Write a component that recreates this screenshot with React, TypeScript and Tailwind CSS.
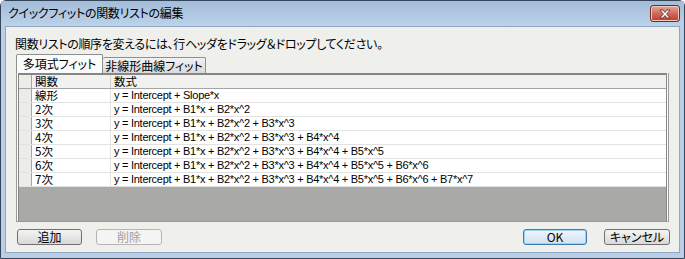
import React from 'react';

const jp = { fontFamily: '"Noto Sans CJK JP", "Noto Sans", sans-serif', fontFeatureSettings: '"palt"' } as React.CSSProperties;
const latin = { fontFamily: '"Liberation Sans", "Noto Sans CJK JP", sans-serif' } as React.CSSProperties;

const rows: [string, string][] = [
    ['線形', 'y = Intercept + Slope*x'],
    ['2次', 'y = Intercept + B1*x + B2*x^2'],
    ['3次', 'y = Intercept + B1*x + B2*x^2 + B3*x^3'],
    ['4次', 'y = Intercept + B1*x + B2*x^2 + B3*x^3 + B4*x^4'],
    ['5次', 'y = Intercept + B1*x + B2*x^2 + B3*x^3 + B4*x^4 + B5*x^5'],
    ['6次', 'y = Intercept + B1*x + B2*x^2 + B3*x^3 + B4*x^4 + B5*x^5 + B6*x^6'],
    ['7次', 'y = Intercept + B1*x + B2*x^2 + B3*x^3 + B4*x^4 + B5*x^5 + B6*x^6 + B7*x^7'],
];

const CloseIcon = () => (
    <svg width="14" height="10" viewBox="0 0 14 10">
        <path d="M2 1 L5 1 L7 3.5 L9 1 L12 1 L8.6 5 L12 9 L9 9 L7 6.5 L5 9 L2 9 L5.4 5 Z" fill="#ffffff" stroke="#5a2a24" strokeWidth="0.8" />
    </svg>
);

const Button = ({ label, primary, disabled, width }: { label: string; primary?: boolean; disabled?: boolean; width: string }) => (
    <div
        className={
            'flex h-[16px] items-center justify-center rounded-[3px] border text-[12px] leading-none ' +
            width + ' ' +
            (disabled
                ? 'border-[#b5b5b5] bg-[#f4f4f4] text-[#a0a0a0]'
                : primary
                    ? 'border-[#3d7bad] bg-gradient-to-b from-[#f0f6fb] to-[#cfe2f1] text-black shadow-[inset_0_0_0_1px_#9fd3f4]'
                    : 'border-[#707070] bg-gradient-to-b from-[#f4f4f4] to-[#d8d8d8] text-black')
        }
        style={jp}
    >
        {label}
    </div>
);

export default function App() {
    return (
        <div className="h-[259px] w-[685px] overflow-hidden bg-white">
            <div className="flex h-full w-full flex-col rounded-t-[6px] border border-[#34455a] bg-[#b9cfe8]">
                {/* Title bar */}
                <div className="flex h-[25px] items-start justify-between bg-gradient-to-b from-[#a3bcd9] to-[#bcd2ea] pl-[7px] pr-[4px]">
                    <span className="mt-[4px] text-[12px] leading-[16px] tracking-[-0.3px] text-black" style={jp}>クイックフィットの関数リストの編集</span>
                    <div className="mt-[4px] flex h-[17px] w-[30px] items-center justify-center rounded-[3px] border border-[#6b2e2a] bg-gradient-to-b from-[#e3a899] via-[#cf6a5a] to-[#c0392d] shadow-[inset_0_0_0_1px_#f0c8bc]">
                        <CloseIcon />
                    </div>
                </div>

                {/* Body */}
                <div className="mx-[4px] mb-[5px] flex flex-1 flex-col border border-[#8fa6c0] bg-[#eff0ec]">
                    <div className="ml-[9px] mt-[10px] h-[14px] text-[12px] leading-[14px] tracking-[-0.33px] text-black" style={jp}>
                        関数リストの順序を変えるには、行ヘッダをドラッグ＆ドロップしてください。
                    </div>

                    {/* Tabs */}
                    <div className="ml-[10px] mt-[3px] flex h-[19px] items-end">
                        <div className="flex h-[19px] w-[87px] items-center justify-center rounded-t-[2px] border border-b-0 border-[#8e8f8f] bg-[#fbfbfb] text-[12px] leading-none" style={jp}>
                            多項式フィット
                        </div>
                        <div className="flex h-[16px] w-[103px] items-center justify-center rounded-t-[2px] border border-b-0 border-l-0 border-[#8e8f8f] bg-gradient-to-b from-[#f2f2f2] to-[#d9d9d9] text-[12px] leading-none" style={jp}>
                            非線形曲線フィット
                        </div>
                    </div>

                    {/* Panel / grid */}
                    <div className="ml-[10px] mr-[10px] flex h-[149px] flex-col border-x border-b border-[#9a9a9a] bg-white">
                        <div className="mx-px flex flex-1 flex-col border-x border-t-2 border-[#868686] bg-[#a9aaa7]">
                            <div className="flex h-[14px] border-b border-[#a5a5a5] bg-[#f1f1ef] text-[11.5px] leading-[13px]" style={jp}>
                                <div className="w-[13px] border-r border-[#a5a5a5] bg-[#ecece8]" />
                                <div className="w-[79px] border-r border-[#d0d0d0] pl-[3px]">関数</div>
                                <div className="flex-1 pl-[3px]">数式</div>
                            </div>
                            {rows.map(([name, formula]) => (
                                <div key={name} className="flex h-[14px] border-b border-[#e2e2e2] bg-white leading-[13px]">
                                    <div className="w-[13px] border-r border-[#a5a5a5] bg-[#ecece8]" />
                                    <div className="w-[79px] border-r border-[#e2e2e2] pl-[3px] text-[11.5px]" style={jp}>{name}</div>
                                    <div className="flex-1 pl-[3px] text-[11px] tracking-[-0.27px]" style={latin}>{formula}</div>
                                </div>
                            ))}
                            <div className="flex-1" />
                        </div>
                    </div>

                    {/* Buttons */}
                    <div className="mt-[7px] flex items-center pl-[11px] pr-[9px]">
                        <Button label="追加" width="w-[65px]" />
                        <div className="ml-[14px]">
                            <Button label="削除" width="w-[66px]" disabled />
                        </div>
                        <div className="flex-1" />
                        <Button label="OK" width="w-[64px]" primary />
                        <div className="ml-[17px]">
                            <Button label="キャンセル" width="w-[66px]" />
                        </div>
                    </div>
                </div>
            </div>
        </div>
    );
}
